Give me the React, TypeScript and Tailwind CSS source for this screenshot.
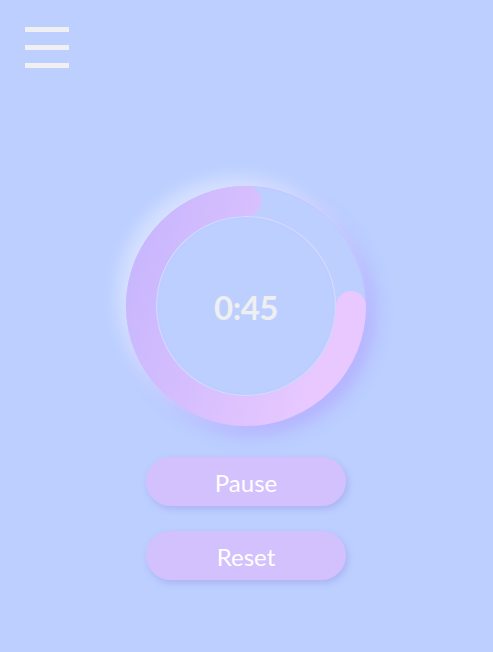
import { useState } from 'react';

const R = 105;
const C = 2 * Math.PI * R;

function TimerRing({ progress, label }: { progress: number; label: string }) {
  return (
    <div className="relative w-[240px] h-[240px] rounded-full shadow-[-8px_-8px_18px_rgba(255,255,255,0.45),8px_8px_18px_rgba(170,140,255,0.45)]">
      <svg width="240" height="240" viewBox="0 0 240 240" className="block">
        <defs>
          <linearGradient id="arcGrad" x1="0" y1="0" x2="1" y2="0.3">
            <stop offset="0%" stopColor="#c7b6fd" />
            <stop offset="100%" stopColor="#e8c8ff" />
          </linearGradient>
        </defs>
        <circle cx="120" cy="120" r="119.5" fill="none" stroke="rgba(200,190,255,0.6)" strokeWidth="1" />
        <circle cx="120" cy="120" r="89.5" fill="none" stroke="rgba(238,232,255,0.45)" strokeWidth="1.2" />
        <circle cx="120" cy="120" r="87.5" fill="none" stroke="rgba(200,195,255,0.2)" strokeWidth="2" />
        <circle
          cx="120"
          cy="120"
          r={R}
          fill="none"
          stroke="url(#arcGrad)"
          strokeWidth="30"
          strokeLinecap="round"
          strokeDasharray={`${C * progress} ${C}`}
        />
      </svg>
      <div className="absolute inset-0 flex items-center justify-center pt-[3px]">
        <span className="text-[33px] font-bold text-[#efeff2] tracking-[-0.5px] [font-family:Lato,sans-serif]">{label}</span>
      </div>
    </div>
  );
}

export default function App() {
  const [paused, setPaused] = useState(false);

  return (
    <main className="min-h-screen w-full bg-[#bccfff] [font-family:Lato,sans-serif] flex flex-col">
      <div className="pt-[27px] pl-[25px]">
        <button className="flex flex-col gap-[13px]" aria-label="Menu">
          <span className="block w-[44px] h-[5px] bg-[#f0f0f2]" />
          <span className="block w-[44px] h-[5px] bg-[#f0f0f2]" />
          <span className="block w-[44px] h-[5px] bg-[#f0f0f2]" />
        </button>
      </div>

      <div className="flex flex-col items-center pt-[118px] pr-[1px]">
        <TimerRing progress={0.75} label="0:45" />

        <div className="flex flex-col gap-[25px] mt-[31px]">
          <button
            onClick={() => setPaused(!paused)}
            className="w-[200px] h-[49px] pt-[2px] rounded-full bg-[#d3c1fe] text-white text-[24px] shadow-[2px_3px_6px_rgba(140,130,220,0.35)]"
          >
            {paused ? 'Resume' : 'Pause'}
          </button>
          <button className="w-[200px] h-[49px] pt-[2px] rounded-full bg-[#d3c1fe] text-white text-[24px] shadow-[2px_3px_6px_rgba(140,130,220,0.35)]">
            Reset
          </button>
        </div>
      </div>
    </main>
  );
}
